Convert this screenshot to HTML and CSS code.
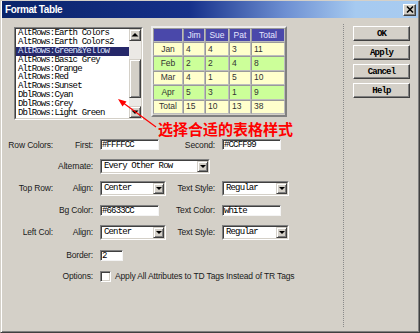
FILE: index.html
```html
<!DOCTYPE html>
<html>
<head>
<meta charset="utf-8">
<link rel="stylesheet" href="styles.css">
</head>
<body>
<div class="window">
  <div class="titlebar">
    <span class="title">Format Table</span>
    <span class="close"><svg width="10" height="9" viewBox="0 0 10 9"><path d="M2 1.5 L8 7.5 M8 1.5 L2 7.5" stroke="#000" stroke-width="1.6"/></svg></span>
  </div>
  <div class="content">
    <div class="main">
      <div class="top">
        <div class="listbox">
          <div class="listbox-in">
            <ul class="items">
              <li>AltRows:Earth Colors</li>
              <li>AltRows:Earth Colors2</li>
              <li class="sel">AltRows:Green&amp;Yellow</li>
              <li>AltRows:Basic Grey</li>
              <li>AltRows:Orange</li>
              <li>AltRows:Red</li>
              <li>AltRows:Sunset</li>
              <li>DblRows:Cyan</li>
              <li>DblRows:Grey</li>
              <li>DblRows:Light Green</li>
            </ul>
            <div class="scrollbar">
              <div class="sb-btn"><svg width="10" height="10" viewBox="0 0 10 10"><polygon points="1.5,6.5 5,3 8.5,6.5" fill="#000"/></svg></div>
              <div class="sb-track"><div class="sb-thumb"></div></div>
              <div class="sb-btn"><svg width="10" height="10" viewBox="0 0 10 10"><polygon points="1.5,3.5 8.5,3.5 5,7" fill="#000"/></svg></div>
            </div>
          </div>
        </div>
        <div class="preview">
          <table>
            <tr class="head"><td class="c1"></td><td class="c2">Jim</td><td class="c3">Sue</td><td class="c4">Pat</td><td class="c5">Total</td></tr>
            <tr class="odd"><td class="rh">Jan</td><td>4</td><td>4</td><td>3</td><td>11</td></tr>
            <tr class="even"><td class="rh">Feb</td><td>2</td><td>2</td><td>4</td><td>8</td></tr>
            <tr class="odd"><td class="rh">Mar</td><td>4</td><td>1</td><td>5</td><td>10</td></tr>
            <tr class="even"><td class="rh">Apr</td><td>5</td><td>3</td><td>1</td><td>9</td></tr>
            <tr class="odd"><td class="rh">Total</td><td>15</td><td>10</td><td>13</td><td>38</td></tr>
          </table>
        </div>
      </div>

      <div class="form">
        <span class="lbl c1">Row Colors:</span>
        <span class="lbl c2">First:</span>
        <div class="field c3"><span class="txt">#FFFFCC</span></div>
        <span class="lbl c4">Second:</span>
        <div class="field c5"><span class="txt">#CCFF99</span></div>

        <span class="lbl c12">Alternate:</span>
        <div class="select wide c34"><div class="select-in"><span class="txt">Every Other Row</span><span class="dd"><svg width="8" height="7" viewBox="0 0 8 7"><polygon points="1,2 7,2 4,5" fill="#000"/></svg></span></div></div>

        <span class="lbl c1">Top Row:</span>
        <span class="lbl c2">Align:</span>
        <div class="select c3"><div class="select-in"><span class="txt">Center</span><span class="dd"><svg width="8" height="7" viewBox="0 0 8 7"><polygon points="1,2 7,2 4,5" fill="#000"/></svg></span></div></div>
        <span class="lbl c4">Text Style:</span>
        <div class="select c5"><div class="select-in"><span class="txt">Regular</span><span class="dd"><svg width="8" height="7" viewBox="0 0 8 7"><polygon points="1,2 7,2 4,5" fill="#000"/></svg></span></div></div>

        <span class="lbl c12">Bg Color:</span>
        <div class="field c3"><span class="txt">#6633CC</span></div>
        <span class="lbl c4">Text Color:</span>
        <div class="field c5"><span class="txt">white</span></div>

        <span class="lbl c1">Left Col:</span>
        <span class="lbl c2">Align:</span>
        <div class="select c3"><div class="select-in"><span class="txt">Center</span><span class="dd"><svg width="8" height="7" viewBox="0 0 8 7"><polygon points="1,2 7,2 4,5" fill="#000"/></svg></span></div></div>
        <span class="lbl c4">Text Style:</span>
        <div class="select c5"><div class="select-in"><span class="txt">Regular</span><span class="dd"><svg width="8" height="7" viewBox="0 0 8 7"><polygon points="1,2 7,2 4,5" fill="#000"/></svg></span></div></div>

        <span class="lbl c12">Border:</span>
        <div class="field small c3"><span class="txt">2</span></div>

        <span class="lbl c12">Options:</span>
        <div class="option c35"><span class="check"></span><span class="opt-text">Apply All Attributes to TD Tags Instead of TR Tags</span></div>
      </div>
    </div>
    <div class="side">
      <div class="btn">OK</div>
      <div class="btn">Apply</div>
      <div class="btn">Cancel</div>
      <div class="btn">Help</div>
    </div>
  </div>
  <div class="annotation">选择合适的表格样式</div>
  <svg class="arrow" width="50" height="40" viewBox="0 0 50 40">
    <line x1="40" y1="29" x2="6" y2="4" stroke="#ff0000" stroke-width="1.2"/>
    <polygon points="2,1 10.5,3.5 6.5,8.5" fill="#ff0000"/>
  </svg>
</div>
</body>
</html>
```
FILE: styles.css
```css
* { box-sizing: border-box; }
html, body { margin: 0; padding: 0; }
body {
  width: 420px;
  height: 333px;
  overflow: hidden;
  background: #d4d0c8;
  font-family: "Liberation Sans", Arial, sans-serif;
  font-size: 8.5px;
  color: #111;
}
.window {
  position: relative;
  width: 420px;
  height: 333px;
  background: #d4d0c8;
  border: 1px solid;
  border-color: #d4d0c8 #404040 #404040 #d4d0c8;
  box-shadow: inset 1px 0 0 #fff, inset -1px -1px 0 #808080;
  padding: 0 1px 1px 1px;
  display: flex;
  flex-direction: column;
}
.titlebar {
  height: 17px;
  flex: none;
  display: flex;
  align-items: center;
  justify-content: space-between;
  padding: 0 2px 0 3px;
  background: linear-gradient(90deg, #0a246a 0%, #16308a 45%, #6d8fd2 68%, #a6caf0 85%, #a8cbf0 100%);
}
.title {
  color: #fff;
  font-weight: bold;
  font-size: 10px;
  letter-spacing: -0.4px;
}
.close {
  width: 13px;
  height: 12px;
  background: #d4d0c8;
  border: 1px solid;
  border-color: #fff #404040 #404040 #fff;
  box-shadow: inset -1px -1px 0 #808080;
  display: flex;
  align-items: center;
  justify-content: center;
}
.close svg { display: block; }
.content {
  flex: 1;
  display: flex;
}
.main {
  width: 341px;
  flex: none;
  padding-top: 8px;
}
.top {
  display: flex;
  align-items: flex-start;
  gap: 8px;
  padding-left: 12px;
  height: 93px;
}
.listbox {
  margin-top: 1px;
  width: 129px;
  height: 93px;
  border: 1px solid;
  border-color: #808080 #fff #fff #808080;
}
.listbox-in {
  height: 100%;
  border: 1px solid;
  border-color: #404040 #d4d0c8 #d4d0c8 #404040;
  background: #fff;
  display: flex;
}
.items {
  list-style: none;
  margin: 0;
  padding: 0;
  flex: 1;
  overflow: hidden;
  font-family: "Liberation Mono", "Courier New", monospace;
  font-size: 9px;
  letter-spacing: -0.85px;
  color: #000;
}
.items li {
  height: 8.9px;
  line-height: 9px;
  padding-left: 2px;
  white-space: nowrap;
}
.items li.sel {
  background: #26286a;
  color: #dfe4ff;
}
.scrollbar {
  width: 12px;
  flex: none;
  display: flex;
  flex-direction: column;
}
.sb-btn {
  height: 12px;
  flex: none;
  background: #d4d0c8;
  border: 1px solid;
  border-color: #d4d0c8 #404040 #404040 #d4d0c8;
  box-shadow: inset 1px 1px 0 #fff, inset -1px -1px 0 #808080;
  display: flex;
  align-items: center;
  justify-content: center;
}
.sb-btn svg { display: block; }
.sb-track {
  flex: 1;
  background: #ebe9e5;
}
.sb-thumb {
  margin-top: 18px;
  height: 39px;
  background: #d4d0c8;
  border: 1px solid;
  border-color: #d4d0c8 #404040 #404040 #d4d0c8;
  box-shadow: inset 1px 1px 0 #fff, inset -1px -1px 0 #808080;
}
.preview {
  border: 2px solid;
  border-color: #ececec #808080 #808080 #ececec;
  padding-bottom: 1px;
  background: #d4d0c8;
}
.preview table {
  border-collapse: separate;
  border-spacing: 0;
  font-size: 8.5px;
  color: #333;
}
.preview td {
  padding: 0 0 0 2px;
  border: 1px solid;
  border-color: #9a9a9a #bdbdbd #bdbdbd #9a9a9a;
  line-height: 11px;
  white-space: nowrap;
}
.preview tr { height: 14.4px; }
.preview tr.head { height: 14px; }
.preview tr.head td {
  background: #4a48aa;
  color: #e6e6ff;
  text-align: center;
  padding: 0;
}
.preview td.c1 { width: 30px; }
.preview td.c2 { width: 22px; }
.preview td.c3 { width: 24px; }
.preview td.c4 { width: 22px; }
.preview td.c5 { width: 34px; }
.preview td.rh { text-align: center; padding: 0; }
.preview tr.odd td { background: #ffffcc; }
.preview tr.even td { background: #ccff99; }

.form {
  margin-top: 15px;
  display: grid;
  grid-template-columns: 51px 33px 66px 42px 67px;
  grid-template-rows: 21px 22px 22px 22px 22px 24px 18px;
  column-gap: 7px;
  align-items: center;
}
.lbl {
  justify-self: end;
  white-space: nowrap;
  letter-spacing: -0.15px;
  color: #1a1a1a;
}
.c1 { grid-column: 1; }
.c2 { grid-column: 2; }
.c3 { grid-column: 3; }
.c4 { grid-column: 4; }
.c5 { grid-column: 5; }
.c12 { grid-column: 1 / 3; }
.c34 { grid-column: 3 / 5; }
.c35 { grid-column: 3 / 6; }
.txt {
  font-family: "Liberation Mono", "Courier New", monospace;
  font-size: 9px;
  letter-spacing: -0.85px;
  color: #000;
  white-space: nowrap;
}
.field {
  width: 59px;
  height: 11px;
  background: #fff;
  border: 1px solid;
  border-color: #808080 #f4f4f4 #f4f4f4 #808080;
  box-shadow: inset 1px 1px 0 #404040;
  line-height: 9px;
  padding-left: 1px;
  overflow: visible;
}
.field.small { width: 23px; }
.select {
  height: 15px;
  width: 66px;
  border: 1px solid;
  border-color: #808080 #fff #fff #808080;
}
.select.wide { width: 110px; }
.c5.select { width: 67px; }
.select-in {
  height: 100%;
  border: 1px solid;
  border-color: #404040 #d4d0c8 #d4d0c8 #404040;
  background: #fff;
  display: flex;
  align-items: center;
  justify-content: space-between;
  padding-left: 2px;
}
.dd {
  width: 11px;
  height: 11px;
  background: #d4d0c8;
  border: 1px solid;
  border-color: #d4d0c8 #404040 #404040 #d4d0c8;
  box-shadow: inset 1px 1px 0 #fff, inset -1px -1px 0 #808080;
  display: flex;
  align-items: center;
  justify-content: center;
}
.dd svg { display: block; }
.option {
  display: flex;
  align-items: center;
  gap: 4px;
}
.check {
  width: 11px;
  height: 11px;
  flex: none;
  background: #fff;
  border: 1px solid;
  border-color: #808080 #fff #fff #808080;
  box-shadow: inset 1px 1px 0 #404040, inset -1px -1px 0 #d4d0c8;
}
.opt-text {
  white-space: nowrap;
  letter-spacing: -0.15px;
  color: #1a1a1a;
}
.side {
  flex: 1;
  margin: 6px 0 4px 0;
  border-left: 1px dotted #8a8a8a;
  padding: 2px 0 0 9px;
  display: flex;
  flex-direction: column;
  gap: 4px;
}
.btn {
  width: 57px;
  height: 15px;
  background: #d4d0c8;
  border: 1px solid;
  border-color: #fff #404040 #404040 #fff;
  box-shadow: inset -1px -1px 0 #808080;
  display: flex;
  align-items: center;
  justify-content: center;
  font-family: "Liberation Mono", "Courier New", monospace;
  font-size: 9px;
  font-weight: bold;
  letter-spacing: -0.8px;
  color: #000;
}
.annotation {
  position: absolute;
  left: 157px;
  top: 119px;
  font-family: "Noto Sans CJK SC", sans-serif;
  font-weight: 700;
  font-size: 15px;
  line-height: 17px;
  color: #ff0000;
  white-space: nowrap;
}
.arrow {
  position: absolute;
  left: 115px;
  top: 97px;
}
```
